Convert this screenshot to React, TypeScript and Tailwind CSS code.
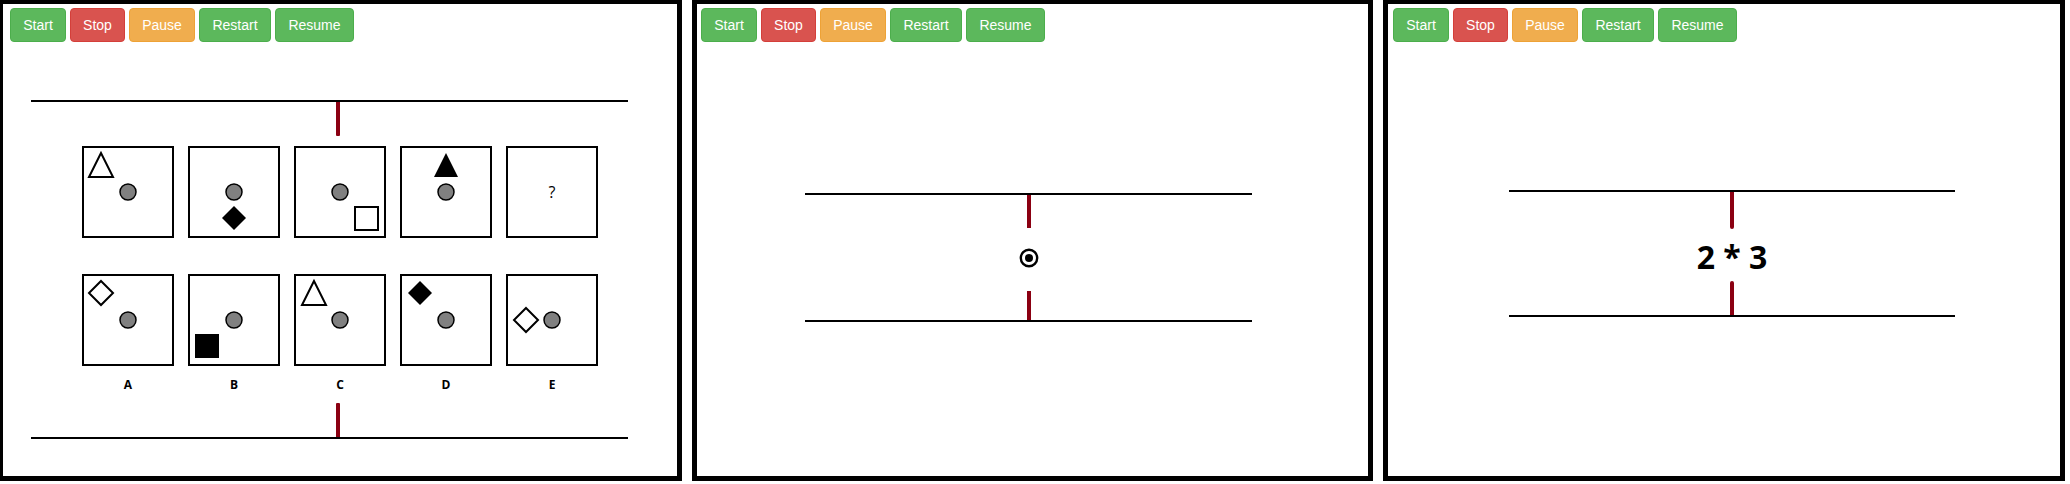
import React from "react";

const btnBase =
  "h-[34px] px-0 border rounded-[4px] text-white text-center text-[14px] leading-[20px] font-['Liberation_Sans',Arial,sans-serif]";

function Buttons({ className }: { className: string }) {
  return (
    <div className={`flex gap-[4px] ${className}`}>
      <button className={`${btnBase} w-[56px] bg-[#5cb85c] border-[#4cae4c]`}>Start</button>
      <button className={`${btnBase} w-[55px] bg-[#d9534f] border-[#d43f3a]`}>Stop</button>
      <button className={`${btnBase} w-[66px] bg-[#f0ad4e] border-[#eea236]`}>Pause</button>
      <button className={`${btnBase} w-[72px] bg-[#5cb85c] border-[#4cae4c]`}>Restart</button>
      <button className={`${btnBase} w-[79px] bg-[#5cb85c] border-[#4cae4c]`}>Resume</button>
    </div>
  );
}

function Dot() {
  return <circle cx="44" cy="44" r="8" fill="#808080" stroke="#000" strokeWidth="1.5" />;
}

function Box({ children }: { children?: React.ReactNode }) {
  return (
    <div className="w-[92px] h-[92px] border-2 border-black bg-white">
      <svg width="88" height="88" viewBox="0 0 88 88">
        {children}
      </svg>
    </div>
  );
}

const RED = "bg-[#8b0012]";

function Panel1() {
  return (
    <div className="w-[684px] h-[482px] border-[5px] border-black bg-white flex flex-col shrink-0">
      <Buttons className="mt-[4px] ml-[7px]" />
      <div className="mt-[58px] ml-[28px] w-[597px] flex flex-col">
        <div className="h-[2px] bg-black" />
        <div className={`ml-[305px] w-[4px] h-[34px] ${RED} rounded-b-[1px]`} />
        <div className="mt-[10px] ml-[51px] flex gap-[14px]">
          <Box>
            <polygon points="17,5 5,29 29,29" fill="#fff" stroke="#000" strokeWidth="2" />
            <Dot />
          </Box>
          <Box>
            <Dot />
            <polygon points="44,58 56,70 44,82 32,70" fill="#000" />
          </Box>
          <Box>
            <Dot />
            <rect x="59" y="59" width="23" height="23" fill="#fff" stroke="#000" strokeWidth="2" />
          </Box>
          <Box>
            <polygon points="44,5 32,29 56,29" fill="#000" />
            <Dot />
          </Box>
          <Box>
            <text x="44" y="50" textAnchor="middle" fontSize="16" fontFamily="'Open Sans', sans-serif" fill="#000">
              ?
            </text>
          </Box>
        </div>
        <div className="mt-[36px] ml-[51px] flex gap-[14px]">
          <Box>
            <polygon points="17,5 29,17 17,29 5,17" fill="#fff" stroke="#000" strokeWidth="2" />
            <Dot />
          </Box>
          <Box>
            <Dot />
            <rect x="5" y="58" width="24" height="24" fill="#000" />
          </Box>
          <Box>
            <polygon points="18,5 6,29 30,29" fill="#fff" stroke="#000" strokeWidth="2" />
            <Dot />
          </Box>
          <Box>
            <polygon points="18,5 30,17 18,29 6,17" fill="#000" />
            <Dot />
          </Box>
          <Box>
            <polygon points="18,32 30,44 18,56 6,44" fill="#fff" stroke="#000" strokeWidth="2" />
            <Dot />
          </Box>
        </div>
        <div className="mt-[11px] ml-[51px] flex gap-[14px] font-['Open_Sans',sans-serif] font-bold text-[12px] leading-[16px] text-black">
          {["A", "B", "C", "D", "E"].map((l) => (
            <div key={l} className="w-[92px] text-center">
              {l}
            </div>
          ))}
        </div>
        <div className={`mt-[10px] ml-[305px] w-[4px] h-[34px] ${RED} rounded-t-[1px]`} />
        <div className="h-[2px] bg-black" />
      </div>
    </div>
  );
}

function Panel2() {
  return (
    <div className="w-[681px] h-[482px] border-[5px] border-black bg-white flex flex-col shrink-0">
      <Buttons className="mt-[4px] ml-[4px]" />
      <div className="mt-[151px] ml-[108px] w-[447px] flex flex-col items-center">
        <div className="self-stretch h-[2px] bg-black" />
        <div className={`w-[4px] h-[33px] ${RED}`} />
        <svg className="mt-[20px]" width="20" height="20" viewBox="0 0 20 20">
          <circle cx="10" cy="10" r="8.2" fill="#fff" stroke="#000" strokeWidth="2.4" />
          <circle cx="10" cy="10" r="4" fill="#000" />
        </svg>
        <div className={`mt-[23px] w-[4px] h-[29px] ${RED}`} />
        <div className="self-stretch h-[2px] bg-black" />
      </div>
    </div>
  );
}

function Panel3() {
  return (
    <div className="w-[682px] h-[482px] border-[5px] border-black bg-white flex flex-col shrink-0">
      <Buttons className="mt-[4px] ml-[5px]" />
      <div className="mt-[148px] ml-[121px] w-[446px] flex flex-col items-center">
        <div className="self-stretch h-[2px] bg-black" />
        <div className={`w-[4px] h-[37px] ${RED} rounded-b-[2px]`} />
        <div className="mt-[9px] h-[38px] leading-[38px] text-[32px] font-bold text-black font-['Open_Sans',sans-serif] whitespace-pre">
          2 * 3
        </div>
        <div className={`mt-[5px] w-[4px] h-[34px] ${RED} rounded-t-[2px]`} />
        <div className="self-stretch h-[2px] bg-black" />
      </div>
    </div>
  );
}

export default function App() {
  return (
    <div className="w-[2070px] h-[484px] bg-white overflow-hidden">
      <div className="flex gap-[10px] ml-[-2px] mt-[-1px]">
        <Panel1 />
        <Panel2 />
        <Panel3 />
      </div>
    </div>
  );
}
